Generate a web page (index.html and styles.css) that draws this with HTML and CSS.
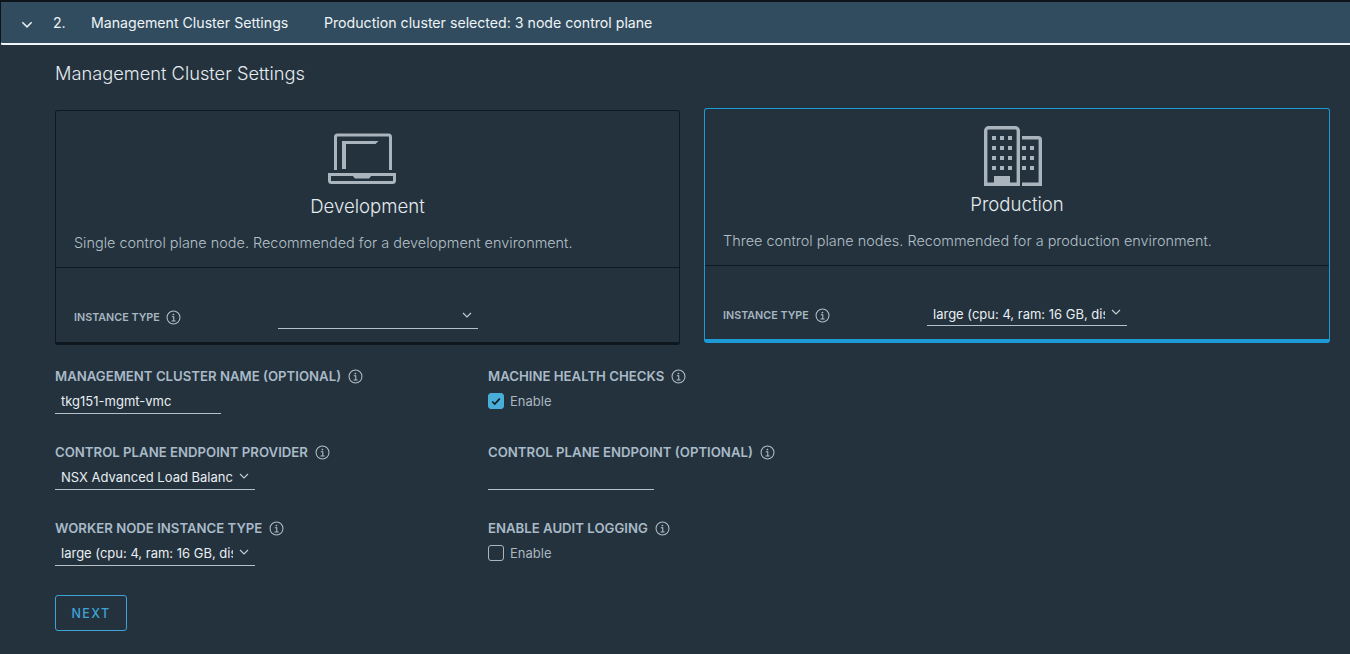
FILE: index.html
```html
<!DOCTYPE html>
<html lang="en">
<head>
<meta charset="utf-8">
<title>Management Cluster Settings</title>
<link rel="stylesheet" href="styles.css">
</head>
<body>
<svg class="sprite" width="0" height="0" aria-hidden="true">
  <symbol id="info" viewBox="0 0 16 16">
    <circle cx="8" cy="8" r="6.9" fill="none" stroke="currentColor" stroke-width="1.1"/>
    <circle cx="7.9" cy="4.8" r="0.9" fill="currentColor"/>
    <path d="M6.2 7.1H8.3V11.6M5.9 11.7H10.2" fill="none" stroke="currentColor" stroke-width="1.1"/>
  </symbol>
  <symbol id="chev" viewBox="0 0 10 6">
    <path d="M1 1l4 4 4-4" fill="none" stroke="currentColor" stroke-width="1.1"/>
  </symbol>
</svg>
<header class="bar">
  <svg class="bar-chev" viewBox="0 0 10 6"><path d="M1 1l4 4 4-4" fill="none" stroke="currentColor" stroke-width="1.3"/></svg>
  <span class="bar-num">2.</span>
  <span class="bar-title">Management Cluster Settings</span>
  <span class="bar-summary">Production cluster selected: 3 node control plane</span>
</header>
<main class="content">
  <h2 class="heading">Management Cluster Settings</h2>
  <div class="cards">
    <section class="card card-dev">
      <div class="card-top">
        <svg class="icon-laptop" viewBox="0 0 79 52" fill="none">
          <path d="M7.500 37V4a2 2 0 0 1 2-2H60.500a2 2 0 0 1 2 2V37" stroke="#aab4bc" stroke-width="3"/>
          <path d="M14 36V8H50.500L47.500 11H18V36Z" fill="#aab4bc"/>
          <path d="M1.500 41.500H66.500V47.500a2 2 0 0 1-2 2H3.500a2 2 0 0 1-2-2Z" stroke="#aab4bc" stroke-width="3"/>
          <path d="M24 42h20l-3 3.500H27z" fill="#aab4bc"/>
        </svg>
        <h3 class="card-title">Development</h3>
        <p class="card-desc">Single control plane node. Recommended for a development environment.</p>
      </div>
      <div class="card-foot">
        <span class="card-label">INSTANCE TYPE <svg class="info"><use href="#info"/></svg></span>
        <div class="select select-empty"><svg class="chev"><use href="#chev"/></svg></div>
      </div>
    </section>
    <section class="card card-prod">
      <div class="card-top">
        <svg class="icon-building" viewBox="0 0 66 60" fill="none">
          <path d="M1.700 58.300V4.700a3 3 0 0 1 3-3H31.300a3 3 0 0 1 3 3V58.300Z" stroke="#aab4bc" stroke-width="3.400"/>
          <path d="M38 11.700H54.300a2 2 0 0 1 2 2V58.300H38" stroke="#aab4bc" stroke-width="3.400"/>
          <path d="M10 50H26V58H10Z" fill="#aab4bc"/>
          <g fill="#aab4bc">
            <rect x="8" y="10" width="4" height="4"/><rect x="16" y="10" width="4" height="4"/><rect x="24" y="10" width="4" height="4"/>
            <rect x="8" y="20" width="4" height="4"/><rect x="16" y="20" width="4" height="4"/><rect x="24" y="20" width="4" height="4"/>
            <rect x="8" y="30" width="4" height="4"/><rect x="16" y="30" width="4" height="4"/><rect x="24" y="30" width="4" height="4"/>
            <rect x="8" y="40" width="4" height="4"/><rect x="16" y="40" width="4" height="4"/><rect x="24" y="40" width="4" height="4"/>
            <rect x="38" y="20" width="4" height="4"/><rect x="46" y="20" width="4" height="4"/>
            <rect x="38" y="30" width="4" height="4"/><rect x="46" y="30" width="4" height="4"/>
            <rect x="38" y="40" width="4" height="4"/><rect x="46" y="40" width="4" height="4"/>
          </g>
        </svg>
        <h3 class="card-title">Production</h3>
        <p class="card-desc">Three control plane nodes. Recommended for a production environment.</p>
      </div>
      <div class="card-foot">
        <span class="card-label">INSTANCE TYPE <svg class="info"><use href="#info"/></svg></span>
        <div class="select"><span class="select-text">large (cpu: 4, ram: 16 GB, disk: 40 GB)</span><svg class="chev"><use href="#chev"/></svg></div>
      </div>
    </section>
  </div>
  <div class="form">
    <div class="field">
      <label class="label">MANAGEMENT CLUSTER NAME (OPTIONAL) <svg class="info"><use href="#info"/></svg></label>
      <div class="input input-name">tkg151-mgmt-vmc</div>
    </div>
    <div class="field">
      <label class="label">MACHINE HEALTH CHECKS <svg class="info"><use href="#info"/></svg></label>
      <div class="check"><span class="box box-on"><svg viewBox="0 0 12 10"><path d="M1.500 5l3 3 6-6.500" fill="none" stroke="#0f1c24" stroke-width="2"/></svg></span>Enable</div>
    </div>
    <div class="field">
      <label class="label">CONTROL PLANE ENDPOINT PROVIDER <svg class="info"><use href="#info"/></svg></label>
      <div class="select select-form"><span class="select-text">NSX Advanced Load Balancer</span><svg class="chev"><use href="#chev"/></svg></div>
    </div>
    <div class="field">
      <label class="label">CONTROL PLANE ENDPOINT (OPTIONAL) <svg class="info"><use href="#info"/></svg></label>
      <div class="input input-endpoint"></div>
    </div>
    <div class="field">
      <label class="label">WORKER NODE INSTANCE TYPE <svg class="info"><use href="#info"/></svg></label>
      <div class="select select-form"><span class="select-text">large (cpu: 4, ram: 16 GB, disk: 40 GB)</span><svg class="chev"><use href="#chev"/></svg></div>
    </div>
    <div class="field">
      <label class="label">ENABLE AUDIT LOGGING <svg class="info"><use href="#info"/></svg></label>
      <div class="check"><span class="box"></span>Enable</div>
    </div>
  </div>
  <button class="next" type="button">NEXT</button>
</main>
</body>
</html>
```
FILE: styles.css
```css
* { box-sizing: border-box; }
html, body { margin: 0; height: 100%; }
body {
  height: 654px;
  overflow: hidden;
  background: #24323d;
  color: #e8eef2;
  font-family: "Inter", "Liberation Sans", sans-serif;
}
.sprite { position: absolute; }
.bar {
  height: 45px;
  display: flex;
  align-items: center;
  background: #314c5f;
  border-top: 2px solid #0e151a;
  border-left: 1px solid #0e151a;
  border-bottom: 2px solid #f2f5f7;
  border-bottom-left-radius: 3px;
  padding-bottom: 1px;
  font-size: 14.15px;
  color: #eef3f6;
}
.bar-chev { width: 12px; height: 7px; margin: 4px 0 0 20px; color: #e8eef2; }
.bar-num { margin-left: 20px; width: 38px; }
.bar-title { width: 233px; }
.content { padding: 17px 20px 0 55px; }
.heading { margin: 0; font-size: 18.25px; font-weight: 300; line-height: 22px; color: #e4ebef; }
.cards { display: flex; gap: 24px; margin-top: 24px; align-items: flex-start; }
.card { flex: 1; display: flex; flex-direction: column; height: 235px; border-radius: 3px; }
.card-dev { flex: 0 0 625px; margin-top: 2px; border: 1px solid #0f181f; border-bottom-width: 3px; }
.card-prod { border: 1px solid #1b9ad6; border-bottom-width: 4px; }
.card-top { height: 157px; display: flex; flex-direction: column; align-items: center; border-bottom: 1px solid #10191f; padding: 0 18px; }
.card-dev .card-top { padding-top: 22px; }
.card-prod .card-top { padding-top: 17px; }
.icon-laptop { width: 79px; height: 52px; display: block; }
.icon-building { width: 66px; height: 60px; display: block; }
.card-title { margin: 10px 0 0; font-size: 18.6px; font-weight: 300; line-height: 22px; color: #e4ebef; }
.card-prod .card-title { margin-top: 7px; }
.card-desc { align-self: stretch; margin: 17px 0 0; font-size: 14.45px; font-weight: 300; line-height: 18px; color: #b3c0c8; }
.card-foot { flex: 1; display: flex; align-items: flex-end; padding: 0 0 13px 18px; }
.card-label { width: 204px; display: flex; align-items: center; gap: 6px; font-size: 10.75px; font-weight: 600; color: #a7b6c2; padding-bottom: 3px; }
.card-dev .card-label { padding-bottom: 4px; }
.info { width: 15px; height: 15px; color: #b4bfc7; flex: none; }
.select {
  position: relative;
  display: flex;
  align-items: center;
  width: 200px;
  height: 26px;
  padding: 3px 0 0 6px;
  border-bottom: 1px solid #b5c0c8;
  font-size: 13px;
  color: #e8eef2;
}
.select-text { width: 172px; overflow: hidden; white-space: nowrap; }
.chev { position: absolute; right: 6px; top: 9px; width: 10px; height: 6px; color: #c5cfd6; }
.form { display: grid; grid-template-columns: 433px 1fr; grid-auto-rows: 76px; margin-top: 21px; }
.field { display: flex; flex-direction: column; align-items: flex-start; }
.label { display: flex; align-items: center; gap: 7px; height: 20px; font-size: 13.2px; font-weight: 600; color: #a9bac8; white-space: nowrap; }
.input { height: 26px; margin-top: 2px; padding-left: 6px; display: flex; align-items: center; border-bottom: 1px solid #b5c0c8; font-size: 13px; color: #e8eef2; }
.input-name { width: 166px; }
.input-endpoint { width: 166px; }
.field .select-form { margin-top: 2px; padding-top: 0; }
.check { display: flex; align-items: center; gap: 6px; height: 16px; margin-top: 7px; font-size: 13px; color: #a9b6bf; }
.box { width: 16px; height: 16px; border: 1px solid #aab6be; border-radius: 3px; display: flex; align-items: center; justify-content: center; }
.box svg { width: 10px; height: 9px; }
.box-on { background: #49afd9; border-color: #49afd9; }
.next {
  display: block;
  width: 72px;
  height: 36px;
  margin-top: 1px;
  padding: 0;
  background: transparent;
  border: 1px solid #3fa3d8;
  border-radius: 3px;
  color: #3fa3d8;
  font-family: inherit;
  font-size: 12.5px;
  font-weight: 500;
  letter-spacing: 1.4px;
}
```
